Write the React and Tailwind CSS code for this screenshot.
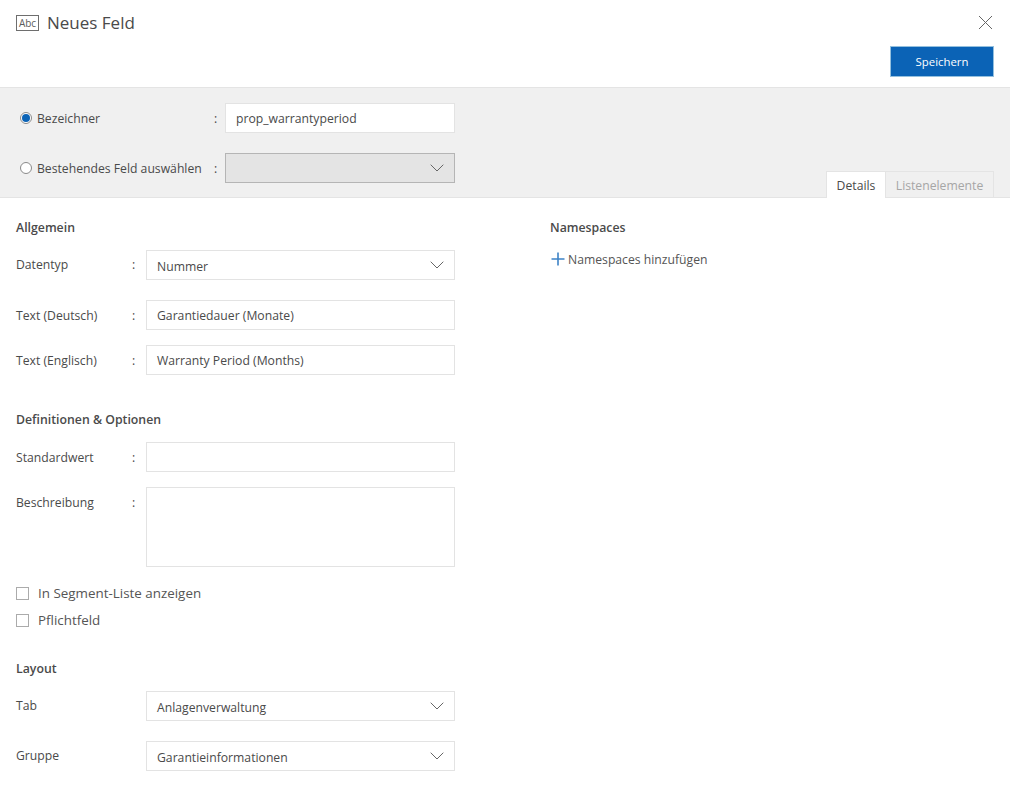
const Chevron = () => (
  <svg width="14" height="8" viewBox="0 0 14 8" fill="none" className="shrink-0">
    <path d="M0.7 0.7 L7 7 L13.3 0.7" stroke="#666666" strokeWidth="1" />
  </svg>
);

const Input = ({ value }) => (
  <div className="flex h-[30px] w-[309px] shrink-0 items-center border border-[#e3e3e3] bg-white pl-[10px] pt-[2px] text-[#4a4a4a]">
    {value}
  </div>
);

const Select = ({ value }) => (
  <div className="flex h-[30px] w-[309px] shrink-0 items-center justify-between border border-[#e3e3e3] bg-white pl-[10px] pr-[10px] text-[#4a4a4a]">
    <span className="pt-[4px]">{value}</span>
    <Chevron />
  </div>
);

const Row = ({ label, colon = true, nudge = true, className = "", children }) => (
  <div className={`flex h-[30px] items-center ${className}`}>
    <span className={`w-[115px] shrink-0 text-[#4a4a4a] ${nudge ? "pt-[2px]" : ""}`}>{label}</span>
    <span className={`w-[15px] shrink-0 pl-[1px] text-[#4a4a4a] ${nudge ? "pt-[2px]" : ""}`}>{colon ? ":" : ""}</span>
    {children}
  </div>
);

const Heading = ({ children, className = "" }) => (
  <div className={`flex h-[20px] items-center pt-[2px] text-[12.3px] font-semibold text-[#4a4a4a] ${className}`}>{children}</div>
);

const Check = ({ label, className = "" }) => (
  <div className={`flex h-[20px] items-center ${className}`}>
    <span className="h-[13px] w-[13px] border border-[#ababab] bg-white" />
    <span className="ml-[9px] text-[13.4px] text-[#555555]">{label}</span>
  </div>
);

export default function App() {
  return (
    <div className="h-[790px] w-[1010px] overflow-hidden bg-white text-[12.2px] font-['Open_Sans',sans-serif]">
      <header className="h-[88px] border-b border-[#e4e4e4] px-4">
        <div className="flex items-start justify-between pt-[15px]">
          <div className="flex h-[16px] items-center">
            <span className="flex h-[16px] w-[23px] items-center justify-center border border-[#6e6e6e] text-[10px] leading-none text-[#5c5c5c]">Abc</span>
            <h1 className="ml-[8px] text-[17px] font-normal text-[#4a4a4a]">Neues Feld</h1>
          </div>
          <svg width="15" height="15" viewBox="0 0 15 15" fill="none" className="mr-[1px]">
            <path d="M1 1 L14 14 M14 1 L1 14" stroke="#666666" strokeWidth="1" />
          </svg>
        </div>
        <div className="mt-[15px] flex justify-end">
          <button className="h-[31px] w-[104px] border border-[#94c0de] bg-[#0b63b6] text-[11.4px] font-normal text-white">Speichern</button>
        </div>
      </header>

      <section className="flex h-[110px] items-end justify-between border-b border-[#e4e4e4] bg-[#f0f0f0] pr-4">
        <div className="self-start pl-[20px] pt-[15px]">
          <div className="flex h-[30px] items-center">
            <span className="flex h-[12px] w-[12px] items-center justify-center rounded-full border border-[#8a8a8a] bg-white">
              <span className="h-[8px] w-[8px] rounded-full bg-[#0b63b6]" />
            </span>
            <span className="ml-[5px] w-[176px] pt-[2px] text-[#4a4a4a]">Bezeichner</span>
            <span className="w-[12px] pl-[1px] pt-[2px] text-[#4a4a4a]">:</span>
            <div className="flex h-[30px] w-[230px] items-center border border-[#e3e3e3] bg-white pl-[10px] pt-[2px] text-[#4a4a4a]">prop_warrantyperiod</div>
          </div>
          <div className="mt-[20px] flex h-[30px] items-center">
            <span className="h-[12px] w-[12px] rounded-full border border-[#8a8a8a] bg-white" />
            <span className="ml-[5px] w-[176px] whitespace-nowrap pt-[2px] text-[#4a4a4a]">Bestehendes Feld auswählen</span>
            <span className="w-[12px] pl-[1px] pt-[2px] text-[#4a4a4a]">:</span>
            <div className="flex h-[30px] w-[230px] items-center justify-end border border-[#b5b5b5] bg-[#e4e4e4] pr-[10px]">
              <Chevron />
            </div>
          </div>
        </div>
        <div className="-mb-[1px] flex h-[27px]">
          <div className="flex w-[60px] items-center justify-center border border-b-0 border-[#e4e4e4] bg-white pt-[3px] text-[#4a4a4a]">Details</div>
          <div className="flex w-[108px] items-center justify-center border border-l-0 border-[#e4e4e4] pt-[3px] text-[#a6a6a6]">Listenelemente</div>
        </div>
      </section>

      <main className="flex">
        <div className="w-[550px] shrink-0 pl-4">
          <Heading className="mt-[19px]">Allgemein</Heading>
          <Row label="Datentyp" nudge={false} className="mt-[13px]"><Select value="Nummer" /></Row>
          <Row label="Text (Deutsch)" className="mt-[20px]"><Input value="Garantiedauer (Monate)" /></Row>
          <Row label="Text (Englisch)" className="mt-[15px]"><Input value="Warranty Period (Months)" /></Row>

          <Heading className="mt-[34px]">Definitionen &amp; Optionen</Heading>
          <Row label="Standardwert" className="mt-[13px]"><Input value="" /></Row>
          <div className="mt-[15px] flex h-[80px]">
            <span className="mt-[7px] w-[115px] shrink-0 text-[#4a4a4a]">Beschreibung</span>
            <span className="mt-[7px] w-[15px] shrink-0 pl-[1px] text-[#4a4a4a]">:</span>
            <div className="h-[80px] w-[309px] border border-[#e3e3e3] bg-white" />
          </div>
          <Check label="In Segment-Liste anzeigen" className="mt-[16px]" />
          <Check label="Pflichtfeld" className="mt-[7px]" />

          <Heading className="mt-[28px]">Layout</Heading>
          <Row label="Tab" colon={false} nudge={false} className="mt-[13px]"><Select value="Anlagenverwaltung" /></Row>
          <Row label="Gruppe" colon={false} nudge={false} className="mt-[20px]"><Select value="Garantieinformationen" /></Row>
        </div>

        <div className="flex-1">
          <Heading className="mt-[19px]">Namespaces</Heading>
          <div className="mt-[12px] flex h-[20px] items-center">
            <svg width="14" height="14" viewBox="0 0 14 14" fill="none" className="ml-[1px]">
              <path d="M7 0.5 V13.5 M0.5 7 H13.5" stroke="#3d83c6" strokeWidth="1.6" />
            </svg>
            <span className="ml-[3px] pt-[2px] text-[#555555]">Namespaces hinzufügen</span>
          </div>
        </div>
      </main>
    </div>
  );
}
